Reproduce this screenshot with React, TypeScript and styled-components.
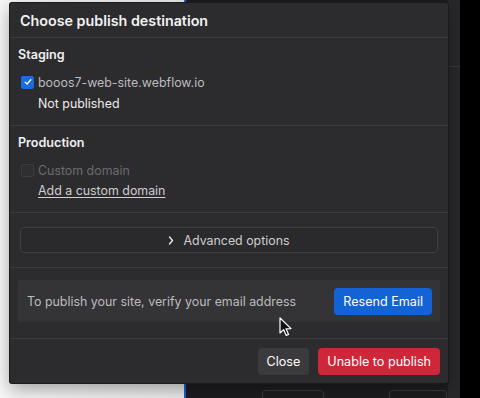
import React from "react";
import styled, { createGlobalStyle } from "styled-components";

const Global = createGlobalStyle`
  html, body { margin: 0; padding: 0; background: #000; }
  body { font-family: Inter, "Noto Sans", "Liberation Sans", sans-serif; -webkit-font-smoothing: antialiased; }
  #root { width: 480px; height: 398px; overflow: hidden; }
`;

const Stage = styled.div`
  position: relative;
  width: 480px;
  height: 398px;
  display: flex;
  overflow: hidden;
`;

const LightPane = styled.div`
  width: 184px;
  background: linear-gradient(90deg, #f6f6f6 0%, #e9e9ea 100%);
`;

const BlueEdge = styled.div`
  width: 2px;
  background: #1d5fd6;
`;

const Workspace = styled.div`
  flex: 1;
  background: #1d1c1f;
  display: flex;
  justify-content: flex-end;
`;

const SideStrip = styled.div`
  width: 12px;
  background: #28272a;
  border-left: 1px solid #1f1e21;
  position: relative;
  &::after {
    content: "";
    position: absolute;
    left: 0;
    right: 0;
    top: 66px;
    height: 1px;
    background: #3a393c;
  }
`;

const BlackEdge = styled.div`
  width: 20px;
  background: #000;
`;

const GhostButton = styled.div<{ $left: number; $width: number }>`
  position: absolute;
  top: 390px;
  height: 20px;
  border: 1px solid #3a393c;
  border-radius: 4px;
  left: ${(p) => p.$left}px;
  width: ${(p) => p.$width}px;
`;

const Dialog = styled.div`
  position: absolute;
  left: 10px;
  top: 3px;
  width: 438px;
  height: 380px;
  background: #2c2b2e;
  border-radius: 2px;
  box-shadow: 0 0 0 1px #1a191c, 0 6px 18px rgba(0, 0, 0, 0.35);
  display: flex;
  flex-direction: column;
  color: #e8e8e8;
  font-size: 12.4px;
`;

const Header = styled.div`
  height: 34px;
  display: flex;
  align-items: center;
  padding: 0 10px;
  font-size: 14.3px;
  font-weight: 600;
  color: #f2f2f2;
  border-bottom: 1px solid #3b3a3d;
`;

const Section = styled.div<{ $height: number }>`
  height: ${(p) => p.$height}px;
  box-sizing: border-box;
  border-bottom: 1px solid #3b3a3d;
  padding: 8px 8px 0;
  display: flex;
  flex-direction: column;
`;

const SectionTitle = styled.div`
  font-size: 12.6px;
  font-weight: 600;
  color: #f0f0f0;
  height: 18px;
  line-height: 18px;
  margin-bottom: 8px;
`;

const OptionRow = styled.div<{ $disabled?: boolean }>`
  display: flex;
  align-items: center;
  gap: 4px;
  height: 20px;
  padding-left: 3px;
  color: ${(p) => (p.$disabled ? "#6c6b6e" : "#bdbcbf")};
`;

const Box = styled.span<{ $checked?: boolean }>`
  width: 13px;
  height: 13px;
  box-sizing: border-box;
  border-radius: 2px;
  display: inline-flex;
  align-items: center;
  justify-content: center;
  background: ${(p) => (p.$checked ? "#1b6ddb" : "#2f2e31")};
  border: 1px solid ${(p) => (p.$checked ? "#1b6ddb" : "#3c3b3e")};
`;

const SubLine = styled.div`
  padding-left: 20px;
  height: 22px;
  line-height: 23px;
  color: #ececec;
`;

const LinkLine = styled.a`
  margin-left: 20px;
  height: 22px;
  line-height: 21px;
  color: #cfced1;
  text-decoration: underline;
  text-underline-offset: 2px;
  align-self: flex-start;
`;

const AdvancedWrap = styled.div`
  height: 55px;
  box-sizing: border-box;
  border-bottom: 1px solid #3b3a3d;
  padding: 14px 10px 0;
`;

const AdvancedButton = styled.div`
  height: 26px;
  box-sizing: border-box;
  border: 1px solid #3f3e41;
  border-radius: 4px;
  background: #2a292c;
  display: flex;
  align-items: center;
  justify-content: center;
  gap: 9px;
  color: #cfced1;
`;

const NoticeWrap = styled.div`
  height: 71px;
  box-sizing: border-box;
  border-bottom: 1px solid #3b3a3d;
  padding: 12px 8px 0;
`;

const Notice = styled.div`
  height: 42px;
  background: #343336;
  border-radius: 2px;
  display: flex;
  align-items: center;
  justify-content: space-between;
  padding: 0 8px 0 9px;
  color: #bdbcbf;
`;

const Button = styled.button<{ $tone: "blue" | "gray" | "red" }>`
  height: 27px;
  border: none;
  border-radius: 4px;
  font-family: inherit;
  font-size: 12.6px;
  padding: 0 9px;
  color: #fff;
  background: ${(p) =>
    p.$tone === "blue" ? "#1363d6" : p.$tone === "red" ? "#cf2639" : "#3b3a3d"};
`;

const Footer = styled.div`
  flex: 1;
  display: flex;
  align-items: flex-start;
  justify-content: flex-end;
  gap: 9px;
  padding: 9px 8px 0;
`;

const Cursor = styled.svg`
  position: absolute;
  left: 279px;
  top: 317px;
`;

export default function App() {
  return (
    <>
      <Global />
      <Stage>
        <LightPane />
        <BlueEdge />
        <Workspace>
          <SideStrip />
        </Workspace>
        <BlackEdge />
        <GhostButton $left={262} $width={60} />
        <GhostButton $left={389} $width={56} />
        <Dialog>
          <Header>Choose publish destination</Header>
          <Section $height={88}>
            <SectionTitle>Staging</SectionTitle>
            <OptionRow>
              <Box $checked>
                <svg width="8" height="8" viewBox="0 0 8 8">
                  <path d="M1.2 4.2 L3.1 6 L6.8 1.8" fill="none" stroke="#fff" strokeWidth="1.3" strokeLinecap="round" strokeLinejoin="round" />
                </svg>
              </Box>
              booos7-web-site.webflow.io
            </OptionRow>
            <SubLine>Not published</SubLine>
          </Section>
          <Section $height={87}>
            <SectionTitle>Production</SectionTitle>
            <OptionRow $disabled>
              <Box />
              Custom domain
            </OptionRow>
            <LinkLine>Add a custom domain</LinkLine>
          </Section>
          <AdvancedWrap>
            <AdvancedButton>
              <svg width="6" height="9" viewBox="0 0 6 9">
                <path d="M1.5 1 L4.5 4.5 L1.5 8" fill="none" stroke="#e8e8e8" strokeWidth="1.4" strokeLinecap="round" strokeLinejoin="round" />
              </svg>
              Advanced options
            </AdvancedButton>
          </AdvancedWrap>
          <NoticeWrap>
            <Notice>
              To publish your site, verify your email address
              <Button $tone="blue">Resend Email</Button>
            </Notice>
          </NoticeWrap>
          <Footer>
            <Button $tone="gray">Close</Button>
            <Button $tone="red">Unable to publish</Button>
          </Footer>
        </Dialog>
        <Cursor width="14" height="20" viewBox="0 0 14 20">
          <path d="M1 1 L1 16 L4.6 12.6 L7.2 18.4 L9.6 17.4 L7 11.8 L12 11.6 Z" fill="#111" stroke="#fff" strokeWidth="1.2" strokeLinejoin="round" />
        </Cursor>
      </Stage>
    </>
  );
}
